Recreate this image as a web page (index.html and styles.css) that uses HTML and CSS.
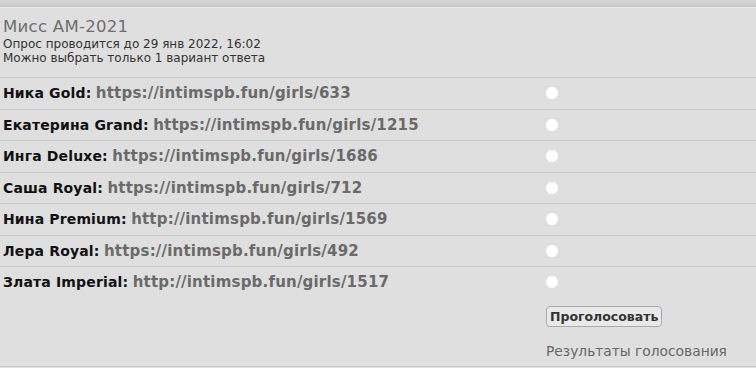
FILE: index.html
```html
<!DOCTYPE html>
<html lang="ru">
<head>
<meta charset="utf-8">
<link rel="stylesheet" href="styles.css">
</head>
<body>
<div class="topbar"></div>
<div class="poll">
  <div class="head">
    <div class="title">Мисс АМ-2021</div>
    <div class="info">Опрос проводится до 29 янв 2022, 16:02</div>
    <div class="info">Можно выбрать только 1 вариант ответа</div>
  </div>
  <div class="row"><div class="label"><b>Ника Gold:</b> <span class="url">https://intimspb.fun/girls/633</span></div><span class="radio"></span></div>
  <div class="row"><div class="label"><b>Екатерина Grand:</b> <span class="url">https://intimspb.fun/girls/1215</span></div><span class="radio"></span></div>
  <div class="row"><div class="label"><b>Инга Deluxe:</b> <span class="url">https://intimspb.fun/girls/1686</span></div><span class="radio"></span></div>
  <div class="row"><div class="label"><b>Саша Royal:</b> <span class="url">https://intimspb.fun/girls/712</span></div><span class="radio"></span></div>
  <div class="row"><div class="label"><b>Нина Premium:</b> <span class="url">http://intimspb.fun/girls/1569</span></div><span class="radio"></span></div>
  <div class="row"><div class="label"><b>Лера Royal:</b> <span class="url">https://intimspb.fun/girls/492</span></div><span class="radio"></span></div>
  <div class="row"><div class="label"><b>Злата Imperial:</b> <span class="url">http://intimspb.fun/girls/1517</span></div><span class="radio"></span></div>
  <div class="actions">
    <button class="vote">Проголосовать</button>
    <div class="results">Результаты голосования</div>
  </div>
</div>
</body>
</html>
```
FILE: styles.css
```css
html, body {
  margin: 0;
  padding: 0;
  background: #dfdfdf;
  font-family: "DejaVu Sans", Verdana, sans-serif;
}
.topbar {
  height: 7px;
  background: linear-gradient(#d6d6d6, #c9c9c9);
  border-bottom: 1px solid #e8e8e8;
}
.poll {
  background: #dfdfdf;
  border-bottom: 1px solid #c8c8c8;
  height: 359px;
  box-sizing: border-box;
}
.head {
  padding: 9px 0 0 3px;
  height: 69px;
  box-sizing: border-box;
}
.title {
  font-size: 16.5px;
  color: #6e6e6e;
  line-height: 20px;
  letter-spacing: 0.3px;
}
.info {
  font-size: 12px;
  line-height: 14px;
  color: #333;
}
.info:first-of-type {
  margin-top: 2px;
}
.row {
  display: grid;
  grid-template-columns: 546px 1fr;
  align-items: center;
  height: 31.5px;
  box-sizing: border-box;
  border-top: 1px solid #c9c9c9;
}
.label {
  padding-left: 3px;
  font-size: 14px;
  color: #111;
  white-space: nowrap;
}
.label b {
  font-weight: bold;
  letter-spacing: 0.15px;
}
.url {
  color: #6a6a6a;
  font-weight: bold;
  font-size: 15px;
  letter-spacing: 0.2px;
}
.radio {
  width: 12px;
  height: 12px;
  border-radius: 50%;
  background: #fff;
  box-shadow: 0 0 1px #e8e8e8;
}
.actions {
  padding: 8px 0 0 546px;
}
.vote {
  font-family: "DejaVu Sans", Verdana, sans-serif;
  font-size: 12.5px;
  font-weight: bold;
  color: #333;
  background: #e9e9e9;
  border: 1px solid #aaa;
  border-radius: 4px;
  padding: 2px 3px;
  height: 21px;
  margin: 0;
}
.results {
  margin-top: 16px;
  font-size: 13.8px;
  color: #666;
}
```
